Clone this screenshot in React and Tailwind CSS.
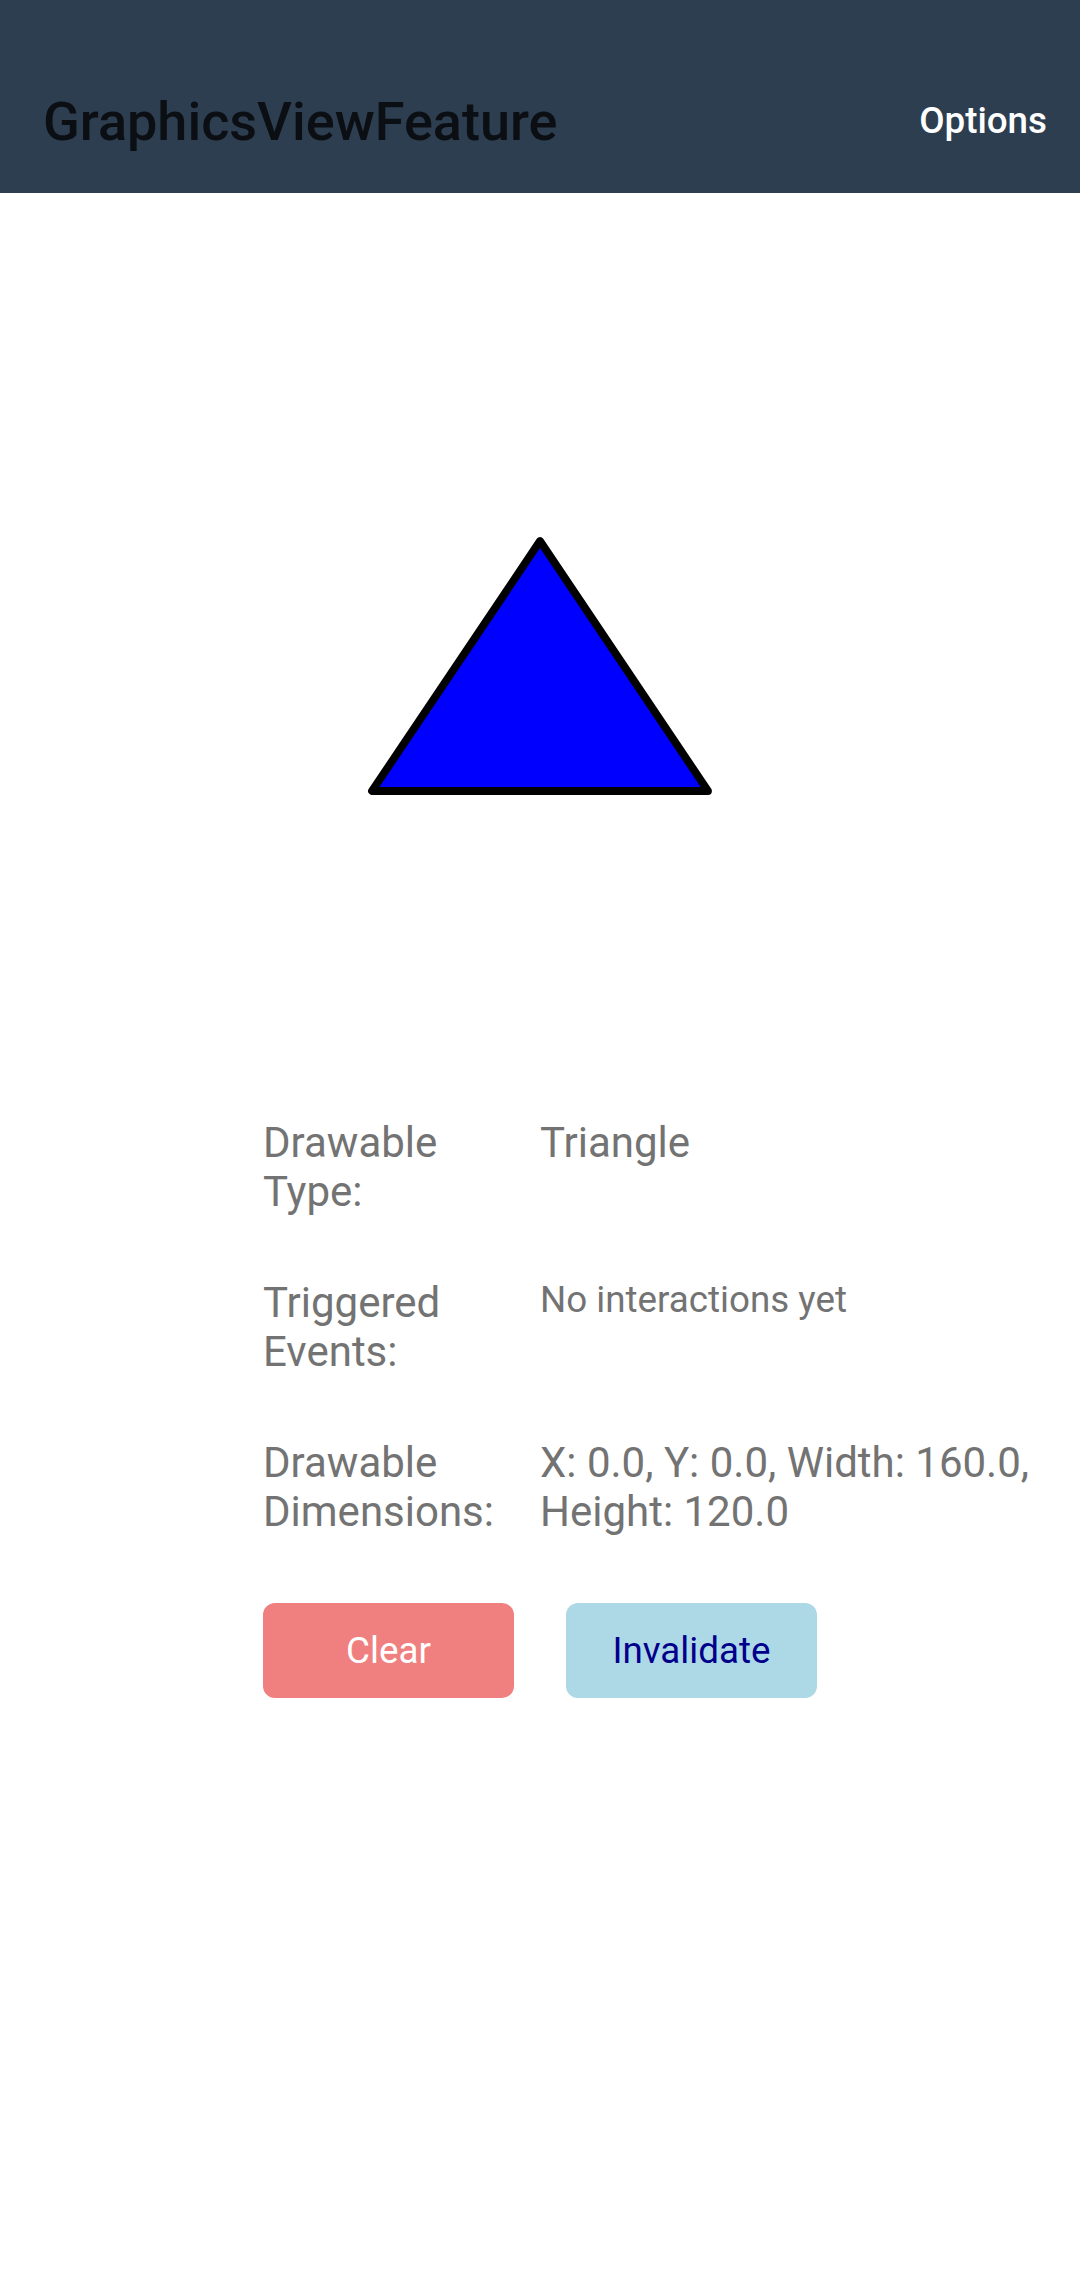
import React from "react";

const rows = [
  { label: "Drawable Type:", value: "Triangle", small: false },
  { label: "Triggered Events:", value: "No interactions yet", small: true },
  {
    label: "Drawable Dimensions:",
    value: "X: 0.0, Y: 0.0, Width: 160.0, Height: 120.0",
    small: false,
  },
];

function Triangle() {
  return (
    <svg width="360" height="272" viewBox="0 0 360 272">
      <polygon
        points="180,13 12,263 348,263"
        fill="#0000ff"
        stroke="#000000"
        strokeWidth="7.8"
        strokeLinejoin="round"
      />
    </svg>
  );
}

export default function App() {
  return (
    <div
      className="min-h-[2289px] w-[1080px] bg-white"
      style={{ fontFamily: "Roboto, 'Noto Sans', sans-serif" }}
    >
      {/* Toolbar */}
      <header className="h-[193px] bg-[#2d3e50] pt-[50px] pl-[43px] pr-[33px] flex items-center justify-between">
        <h1 className="text-[54px] font-medium text-[#0b0e12] leading-none">
          GraphicsViewFeature
        </h1>
        <span className="text-[36.75px] font-medium text-white leading-none">
          Options
        </span>
      </header>

      {/* GraphicsView */}
      <div className="h-[925px] flex justify-center pt-[335px]">
        <Triangle />
      </div>

      {/* Info */}
      <div className="pl-[263px] flex flex-col gap-[62px] text-[#737373]">
        {rows.map((row) => (
          <div key={row.label} className="flex items-start">
            <div className="w-[277px] pr-[20px] text-[42px] leading-[49px]">
              {row.label.split(" ").map((word) => (
                <div key={word}>{word}</div>
              ))}
            </div>
            <div
              className={
                row.small
                  ? "w-[530px] text-[36.75px] leading-[43px]"
                  : "w-[530px] text-[42px] leading-[49px]"
              }
            >
              {row.value}
            </div>
          </div>
        ))}
      </div>

      {/* Buttons */}
      <div className="pl-[263px] pt-[67px] flex gap-[52px]">
        <button className="w-[251px] h-[95px] rounded-[12px] bg-[#f08080] text-white text-[36.75px]">
          Clear
        </button>
        <button className="w-[251px] h-[95px] rounded-[12px] bg-[#add8e6] text-[#00008b] text-[36.75px]">
          Invalidate
        </button>
      </div>
    </div>
  );
}
